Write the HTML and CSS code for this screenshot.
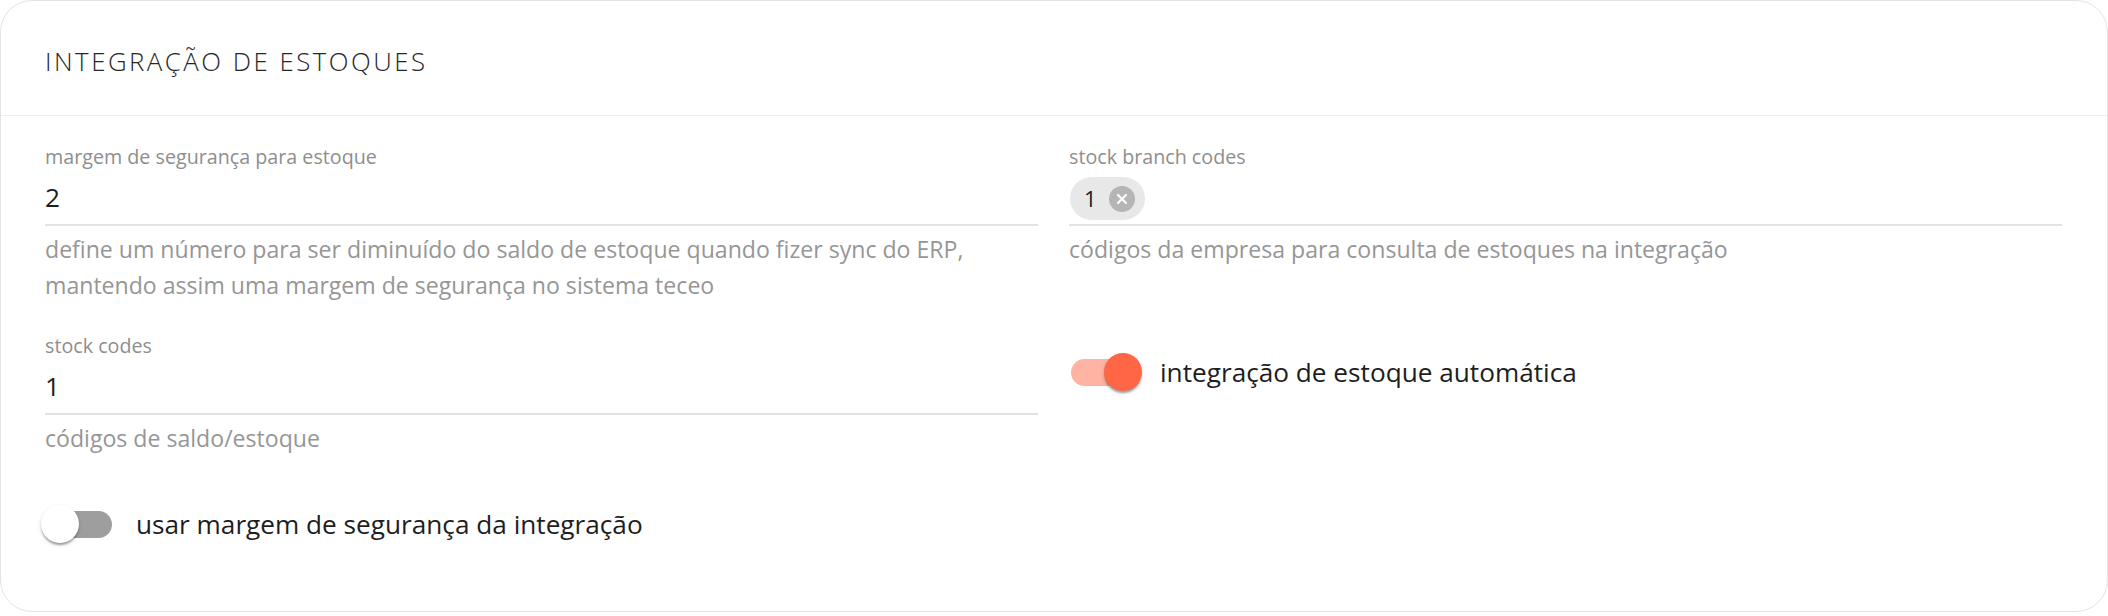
FILE: index.html
```html
<!DOCTYPE html>
<html lang="pt-BR">
<head>
<meta charset="utf-8">
<title>Integração de estoques</title>
<link rel="stylesheet" href="styles.css">
</head>
<body>
<section class="card">
  <header class="card-header">
    <h2 class="card-title">INTEGRAÇÃO DE ESTOQUES</h2>
  </header>
  <div class="card-body">
    <div class="field">
      <label class="field-label">margem de segurança para estoque</label>
      <div class="field-input">2</div>
      <p class="field-helper">define um número para ser diminuído do saldo de estoque quando fizer sync do ERP,<br>mantendo assim uma margem de segurança no sistema teceo</p>
    </div>
    <div class="field">
      <label class="field-label">stock branch codes</label>
      <div class="field-input chips">
        <span class="chip">
          <span class="chip-text">1</span>
          <svg class="chip-delete" width="26" height="26" viewBox="0 0 26 26"><circle cx="13" cy="13" r="13" fill="#b5b5b5"/><path d="M9 9 L17 17 M17 9 L9 17" stroke="#fff" stroke-width="2.2" stroke-linecap="round"/></svg>
        </span>
      </div>
      <p class="field-helper">códigos da empresa para consulta de estoques na integração</p>
    </div>
    <div class="field">
      <label class="field-label">stock codes</label>
      <div class="field-input">1</div>
      <p class="field-helper">códigos de saldo/estoque</p>
    </div>
    <label class="toggle toggle-right">
      <span class="switch on"><span class="track"></span><span class="thumb"></span></span>
      <span class="toggle-text">integração de estoque automática</span>
    </label>
    <label class="toggle toggle-last">
      <span class="switch"><span class="track"></span><span class="thumb"></span></span>
      <span class="toggle-text">usar margem de segurança da integração</span>
    </label>
  </div>
</section>
</body>
</html>
```
FILE: styles.css
```css
* { box-sizing: border-box; }
html, body {
  margin: 0;
  padding: 0;
  background: #ffffff;
  font-family: "Open Sans", "Noto Sans", sans-serif;
}
.card {
  width: 2108px;
  border: 1px solid #e3e3e3;
  border-radius: 32px;
  background: #fff;
  padding-bottom: 68px;
}
.card-header {
  padding: 43px 44px 37px;
  border-bottom: 1px solid #efefef;
}
.card-title {
  margin: 0;
  font-size: 25.8px;
  line-height: 34px;
  font-weight: 300;
  letter-spacing: 2.5px;
  color: #262626;
}
.card-body {
  display: grid;
  grid-template-columns: 1fr 1fr;
  column-gap: 31px;
  row-gap: 30px;
  padding: 28px 45px 0 44px;
  align-items: start;
}
.field {
  display: flex;
  flex-direction: column;
}
.field-label {
  font-size: 19.7px;
  line-height: 26px;
  color: #8e8e8e;
}
.field-input {
  margin-top: 9px;
  font-size: 26.2px;
  line-height: 36px;
  padding-bottom: 9px;
  color: #1e1e1e;
  border-bottom: 2px solid #e3e3e3;
}
.field-input.chips {
  margin-top: 7px;
  padding-bottom: 4px;
  display: flex;
  align-items: center;
  line-height: 43px;
}
.chip {
  display: inline-flex;
  align-items: center;
  height: 43px;
  padding: 0 10px 0 14px;
  gap: 12px;
  border-radius: 22px;
  background: #e8e8e8;
  margin-left: 1px;
}
.chip-text {
  font-size: 22px;
  line-height: 43px;
  color: #1e1e1e;
}
.chip-delete { display: block; }
.field-helper {
  margin: 5px 0 0;
  font-size: 23.1px;
  line-height: 36px;
  color: #969696;
}
.toggle {
  display: flex;
  align-items: center;
  gap: 18px;
  margin-left: -4px;
  cursor: pointer;
}
.toggle-right { margin-top: 20px; }
.toggle-last { margin-top: 19px; }
.toggle-text {
  font-size: 26.2px;
  line-height: 38px;
  color: #1e1e1e;
}
.switch {
  position: relative;
  width: 77px;
  height: 38px;
  flex: none;
}
.track {
  position: absolute;
  left: 6px;
  top: 5.5px;
  width: 65px;
  height: 27px;
  border-radius: 14px;
  background: #9e9e9e;
}
.thumb {
  position: absolute;
  left: 0;
  top: 0;
  width: 38px;
  height: 38px;
  border-radius: 50%;
  background: #fff;
  box-shadow: 0 3px 2px -1px rgba(0,0,0,0.2), 0 2px 2px rgba(0,0,0,0.14), 0 2px 5px rgba(0,0,0,0.12);
}
.switch.on .track { background: #ffb3a2; }
.switch.on .thumb {
  left: 39px;
  background: #ff6645;
}
```
